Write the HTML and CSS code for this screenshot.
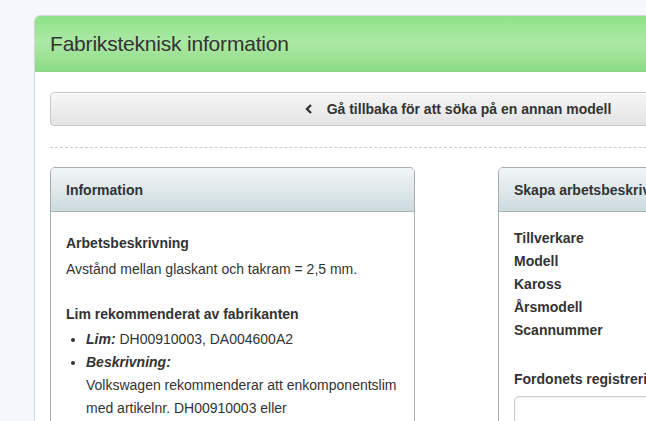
FILE: index.html
```html
<!DOCTYPE html>
<html lang="sv">
<head>
  <meta charset="UTF-8" />
  <meta name="viewport" content="width=device-width, initial-scale=1.0"/>
  <title>Fabriksteknisk information</title>
  <link rel="stylesheet" href="styles.css">
</head>
<body>

  <div class="page">
    <div class="main-panel">
      <div class="main-head">Fabriksteknisk information</div>

      <div class="main-body">
        <button class="back-btn">
          <svg class="chev" width="8" height="10" viewBox="0 0 8 10">
            <path d="M6 1 L2 5 L6 9" fill="none" stroke="#333" stroke-width="2.4"/>
          </svg>
          Gå tillbaka för att söka på en annan modell
        </button>

        <hr class="divider">

        <div class="columns">
          <div class="box box-info">
            <div class="box-head">Information</div>
            <div class="box-body">
              <h4>Arbetsbeskrivning</h4>
              <p>Avstånd mellan glaskant och takram = 2,5 mm.</p>

              <h4 class="gap">Lim rekommenderat av fabrikanten</h4>
              <ul>
                <li><strong><em>Lim:</em></strong> DH00910003, DA004600A2</li>
                <li><strong><em>Beskrivning:</em></strong><br>
                  Volkswagen rekommenderar att enkomponentslim med artikelnr. DH00910003 eller<br>
                  DA004600A2 används.</li>
              </ul>
            </div>
          </div>

          <div class="box box-create">
            <div class="box-head">Skapa arbetsbeskrivning</div>
            <div class="box-body">
              <dl class="facts">
                <dt>Tillverkare</dt>
                <dt>Modell</dt>
                <dt>Kaross</dt>
                <dt>Årsmodell</dt>
                <dt>Scannummer</dt>
              </dl>
              <label class="reg-label">Fordonets registreringsnummer</label>
              <input type="text" class="reg-input">
            </div>
          </div>
        </div>
      </div>
    </div>
  </div>

</body>
</html>
```

FILE: styles.css
```css
* { margin: 0; padding: 0; box-sizing: border-box; }
html, body { overflow: hidden; }
body {
  font-family: "Liberation Sans", Arial, sans-serif;
  font-size: 14px;
  color: #333;
  background-color: #f4f7fc;
}

.page {
  width: 920px;
  padding: 15px 0 0 34px;
}

.main-panel {
  background: #fff;
  border: 1px solid #d6d9dc;
  border-radius: 6px 6px 0 0;
  height: 600px;
}

.main-head {
  height: 56px;
  padding: 0 15px;
  display: flex;
  align-items: center;
  font-size: 21px;
  letter-spacing: -0.2px;
  color: #333;
  border-radius: 5px 5px 0 0;
  border-bottom: 1px solid #8fcf88;
  background: linear-gradient(to bottom, #8fe287 0%, #abe8a4 45%, #a6e59e 60%, #8bdb83 100%);
}

.main-body { padding: 20px 15px; }

.back-btn {
  width: 816px;
  height: 34px;
  display: flex;
  align-items: center;
  justify-content: center;
  gap: 14px;
  font-family: inherit;
  font-size: 14px;
  font-weight: bold;
  color: #333;
  border: 1px solid #c8c8c8;
  border-radius: 4px;
  background: linear-gradient(to bottom, #f6f6f6, #e4e4e4);
  box-shadow: inset 0 1px 0 #fff;
}
.chev { display: block; }

.divider {
  border: none;
  border-top: 1px dashed #c9cdd1;
  margin: 21px 0 19px;
  width: 816px;
}

.columns {
  display: flex;
  gap: 83px;
}

.box {
  border: 1px solid #a9adb0;
  border-radius: 5px 5px 0 0;
  height: 400px;
}
.box-info { width: 365px; }
.box-create { width: 368px; }

.box-head {
  height: 44px;
  padding: 0 15px;
  display: flex;
  align-items: center;
  font-weight: bold;
  border-radius: 4px 4px 0 0;
  border-bottom: 1px solid #a9b4b8;
  background: linear-gradient(to bottom, #f2f5f6, #cddbdf);
  white-space: nowrap;
  overflow: hidden;
}

.box-body {
  padding: 20px 15px;
  line-height: 23px;
}

.box-info h4 { font-size: 14px; margin-bottom: 3px; }
.box-info h4.gap { margin-top: 22px; margin-bottom: 2px; }

.box-info ul { padding-left: 20px; }

.box-create .box-body { padding-top: 15px; }
.facts dt { font-weight: bold; }

.reg-label {
  display: block;
  font-weight: bold;
  margin-top: 26px;
  white-space: nowrap;
}
.reg-input {
  display: block;
  margin-top: 5px;
  width: 100%;
  height: 40px;
  border: 1px solid #ccc;
  border-radius: 5px;
  box-shadow: inset 0 1px 2px rgba(0,0,0,0.08);
}
```
